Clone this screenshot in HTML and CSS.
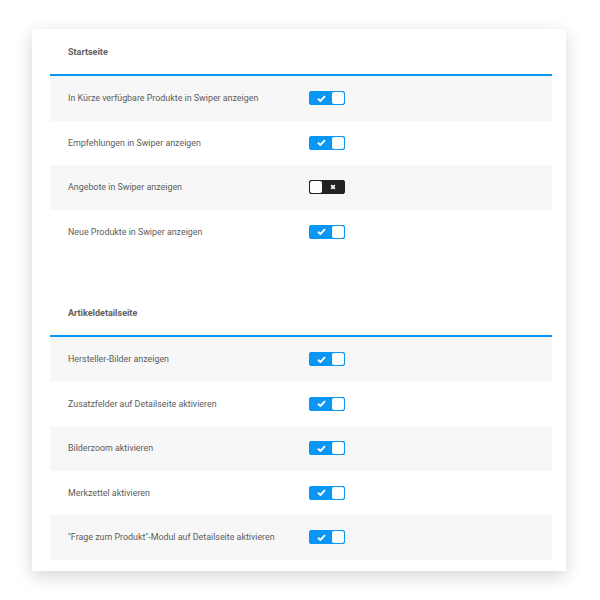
FILE: index.html
```html
<!DOCTYPE html>
<html lang="de">
<head>
<meta charset="utf-8">
<title>Einstellungen</title>
<link rel="stylesheet" href="styles.css">
</head>
<body>
<div class="card">
  <section class="section">
    <div class="section-head">Startseite</div>
    <div class="row"><span class="label">In Kürze verfügbare Produkte in Swiper anzeigen</span><span class="toggle on"><svg class="ico" viewBox="0 0 10 8"><path d="M1 4.2 L3.8 6.8 L9 1.2" fill="none" stroke="#fff" stroke-width="2.2"/></svg><span class="knob"></span></span></div>
    <div class="row"><span class="label">Empfehlungen in Swiper anzeigen</span><span class="toggle on"><svg class="ico" viewBox="0 0 10 8"><path d="M1 4.2 L3.8 6.8 L9 1.2" fill="none" stroke="#fff" stroke-width="2.2"/></svg><span class="knob"></span></span></div>
    <div class="row"><span class="label">Angebote in Swiper anzeigen</span><span class="toggle off"><span class="knob"></span><svg class="ico x" viewBox="0 0 8 8"><path d="M1.5 1.5 L6.5 6.5 M6.5 1.5 L1.5 6.5" fill="none" stroke="#fff" stroke-width="2.2"/></svg></span></div>
    <div class="row"><span class="label">Neue Produkte in Swiper anzeigen</span><span class="toggle on"><svg class="ico" viewBox="0 0 10 8"><path d="M1 4.2 L3.8 6.8 L9 1.2" fill="none" stroke="#fff" stroke-width="2.2"/></svg><span class="knob"></span></span></div>
  </section>
  <section class="section second">
    <div class="section-head">Artikeldetailseite</div>
    <div class="row"><span class="label">Hersteller-Bilder anzeigen</span><span class="toggle on"><svg class="ico" viewBox="0 0 10 8"><path d="M1 4.2 L3.8 6.8 L9 1.2" fill="none" stroke="#fff" stroke-width="2.2"/></svg><span class="knob"></span></span></div>
    <div class="row"><span class="label">Zusatzfelder auf Detailseite aktivieren</span><span class="toggle on"><svg class="ico" viewBox="0 0 10 8"><path d="M1 4.2 L3.8 6.8 L9 1.2" fill="none" stroke="#fff" stroke-width="2.2"/></svg><span class="knob"></span></span></div>
    <div class="row"><span class="label">Bilderzoom aktivieren</span><span class="toggle on"><svg class="ico" viewBox="0 0 10 8"><path d="M1 4.2 L3.8 6.8 L9 1.2" fill="none" stroke="#fff" stroke-width="2.2"/></svg><span class="knob"></span></span></div>
    <div class="row"><span class="label">Merkzettel aktivieren</span><span class="toggle on"><svg class="ico" viewBox="0 0 10 8"><path d="M1 4.2 L3.8 6.8 L9 1.2" fill="none" stroke="#fff" stroke-width="2.2"/></svg><span class="knob"></span></span></div>
    <div class="row"><span class="label">"Frage zum Produkt"-Modul auf Detailseite aktivieren</span><span class="toggle on"><svg class="ico" viewBox="0 0 10 8"><path d="M1 4.2 L3.8 6.8 L9 1.2" fill="none" stroke="#fff" stroke-width="2.2"/></svg><span class="knob"></span></span></div>
  </section>
</div>
</body>
</html>
```

FILE: styles.css
```css
html, body {
  margin: 0;
  padding: 0;
  background: #fff;
}
body {
  font-family: Roboto, "Liberation Sans", sans-serif;
  color: #5a5a5a;
  padding-bottom: 20px;
}
.card {
  margin: 29px 0 0 32px;
  width: 534px;
  height: 542px;
  box-sizing: border-box;
  padding: 0 14px 12px 18px;
  background: #fff;
  box-shadow: 0 5px 16px rgba(0, 0, 0, 0.17);
}
.section.second {
  margin-top: 36px;
}
.section-head {
  height: 45px;
  display: flex;
  align-items: center;
  padding-left: 18px;
  font-size: 9px;
  font-weight: 700;
  color: #606060;
  border-bottom: 2px solid #0a96f5;
}
.row {
  height: 44.5px;
  display: flex;
  align-items: center;
  padding-left: 18px;
}
.row:nth-child(even) {
  background: #f7f7f7;
}
.label {
  width: 241px;
  font-size: 8.9px;
  color: #5c5c5c;
}
.toggle {
  width: 36px;
  height: 14px;
  box-sizing: border-box;
  border-radius: 2px;
  border: 1px solid;
  display: flex;
  align-items: center;
}
.toggle.on {
  background: #0a96f5;
  border-color: #0a96f5;
}
.toggle.off {
  background: #222;
  border-color: #222;
}
.knob {
  width: 12px;
  height: 12px;
  box-sizing: border-box;
  background: #fff;
  border-radius: 2px;
}
.toggle.on .knob {
  margin-left: auto;
}
.ico {
  width: 9px;
  height: 7px;
  margin-left: 7px;
}
.ico.x {
  width: 6px;
  height: 6px;
  margin-left: 8px;
}
```
